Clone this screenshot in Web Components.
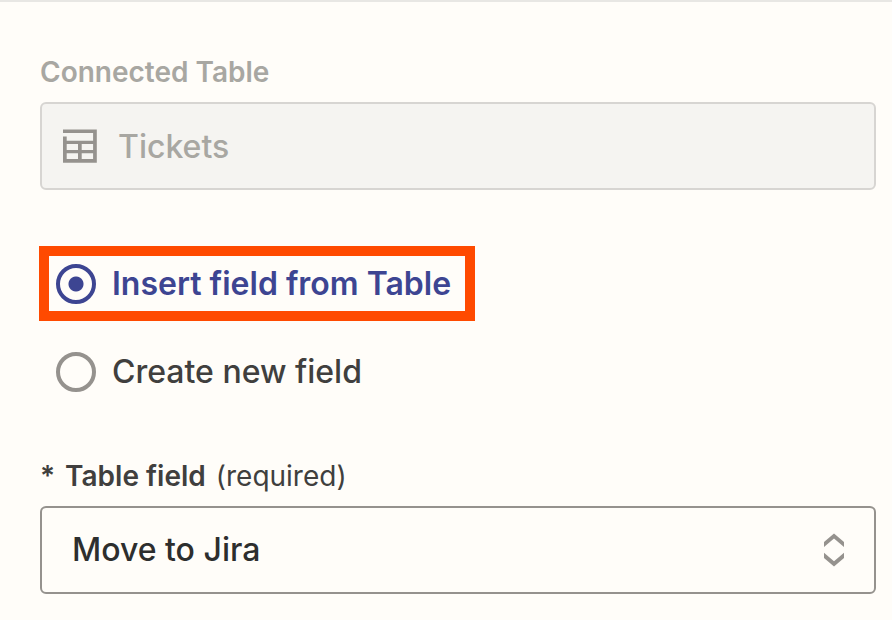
<!DOCTYPE html>
<html lang="en">
<head>
<meta charset="utf-8">
<meta name="viewport" content="width=device-width, initial-scale=1">
<title>Insert field</title>
<style>
  body {
    margin: 0;
    background: #fffdf9;
    color: #403f3e;
    font-family: Inter, "Liberation Sans", sans-serif;
  }
</style>
</head>
<body>
<field-panel>
  <locked-field label="Connected Table" value="Tickets"></locked-field>
  <field-source></field-source>
  <select-field label="Table field" note="(required)" value="Move to Jira"></select-field>
</field-panel>

<script>
class FieldPanel extends HTMLElement {
  constructor() {
    super();
    this.attachShadow({ mode: "open" }).innerHTML = `
      <style>
        :host { display: block; border-top: 2px solid #e8e7e4; }
        form { display: flex; flex-direction: column; padding: 52px 16px 24px 40px; }
      </style>
      <form><slot></slot></form>`;
  }
}

class LockedField extends HTMLElement {
  connectedCallback() {
    this.attachShadow({ mode: "open" }).innerHTML = `
      <style>
        :host { display: flex; flex-direction: column; gap: 12px; }
        label { font-size: 28px; line-height: 36px; font-weight: 600; color: #a8a7a2; }
        .box {
          display: flex; align-items: center; gap: 21px; box-sizing: border-box;
          height: 88px; padding: 0 21px; border: 2px solid #d7d5d2;
          border-radius: 6px; background: #f5f4f1;
        }
        svg { flex: none; width: 34px; height: 34px; fill: #95928e; }
        input {
          flex: 1; min-width: 0; padding: 2px 0 0; border: 0; background: none;
          font: 500 32px/40px Inter, "Liberation Sans", sans-serif;
          color: #a8a7a2;
        }
      </style>
      <label for="field"></label>
      <div class="box">
        <svg viewBox="0 0 34 34" aria-hidden="true">
          <path fill-rule="evenodd" d="M0 .4H33.8V33.8H0V7.6H3.7V11.7H30.1V4H0ZM3.7 15V21H15V15ZM18.7 15V21H30.1V15ZM3.7 24.2V30.1H15V24.2ZM18.7 24.2V30.1H30.1V24.2Z"/>
        </svg>
        <input id="field" type="text" disabled>
      </div>`;
    this.shadowRoot.querySelector("label").textContent = this.getAttribute("label");
    this.shadowRoot.querySelector("input").value = this.getAttribute("value");
  }
}

class FieldSource extends HTMLElement {
  constructor() {
    super();
    this.attachShadow({ mode: "open" }).innerHTML = `
      <style>
        :host {
          display: flex; flex-direction: column; align-items: flex-start; gap: 31px;
          margin: 56px 0 66px;
        }
        label {
          display: flex; align-items: center; gap: 16px; margin-left: 16px;
          font-size: 32px; line-height: 40px; font-weight: 500;
        }
        .highlight {
          margin-left: -1px; padding: 8px 14px 7px 7px; border: 10px solid #ff4a00;
          font-weight: 600; color: #3d4592;
        }
        input {
          appearance: none; flex: none; box-sizing: border-box; width: 40px; height: 40px;
          margin: 0; border: 4px solid #95928e; border-radius: 50%;
        }
        input:checked {
          border-color: #3d4592;
          background: radial-gradient(circle, #3d4592 7px, transparent 8px);
        }
      </style>
      <label class="highlight"><input type="radio" name="source" checked><span>Insert field from Table</span></label>
      <label><input type="radio" name="source"><span>Create new field</span></label>`;
  }
}

class SelectField extends HTMLElement {
  connectedCallback() {
    this.attachShadow({ mode: "open" }).innerHTML = `
      <style>
        :host { display: flex; flex-direction: column; gap: 12px; }
        label { display: flex; gap: 10px; font-size: 28px; line-height: 36px; }
        b { font-weight: 600; }
        .box { display: grid; align-items: center; }
        select, svg { grid-area: 1 / 1; }
        select {
          appearance: none; box-sizing: border-box; width: 100%; height: 88px;
          padding: 0 72px 0 30px; border: 2px solid #95928e; border-radius: 6px;
          background: #fffdf9; color: #2d2e2e;
          font: 500 32px/40px Inter, "Liberation Sans", sans-serif;
        }
        svg {
          justify-self: end; width: 20px; height: 34px; margin-right: 32px;
          fill: #95928e; pointer-events: none;
        }
      </style>
      <label for="field"><b>*</b><b class="name"></b><span></span></label>
      <div class="box">
        <select id="field"><option></option></select>
        <svg viewBox="0 0 20 34" aria-hidden="true">
          <path d="M10 .6L20 9V14L10 5.6L0 14V9ZM0 19.8L10 28.3L20 19.8V25L10 33.4L0 25Z"/>
        </svg>
      </div>`;
    this.shadowRoot.querySelector(".name").textContent = this.getAttribute("label");
    this.shadowRoot.querySelector("label span").textContent = this.getAttribute("note");
    this.shadowRoot.querySelector("option").textContent = this.getAttribute("value");
  }
}

customElements.define("field-panel", FieldPanel);
customElements.define("locked-field", LockedField);
customElements.define("field-source", FieldSource);
customElements.define("select-field", SelectField);
</script>
</body>
</html>
